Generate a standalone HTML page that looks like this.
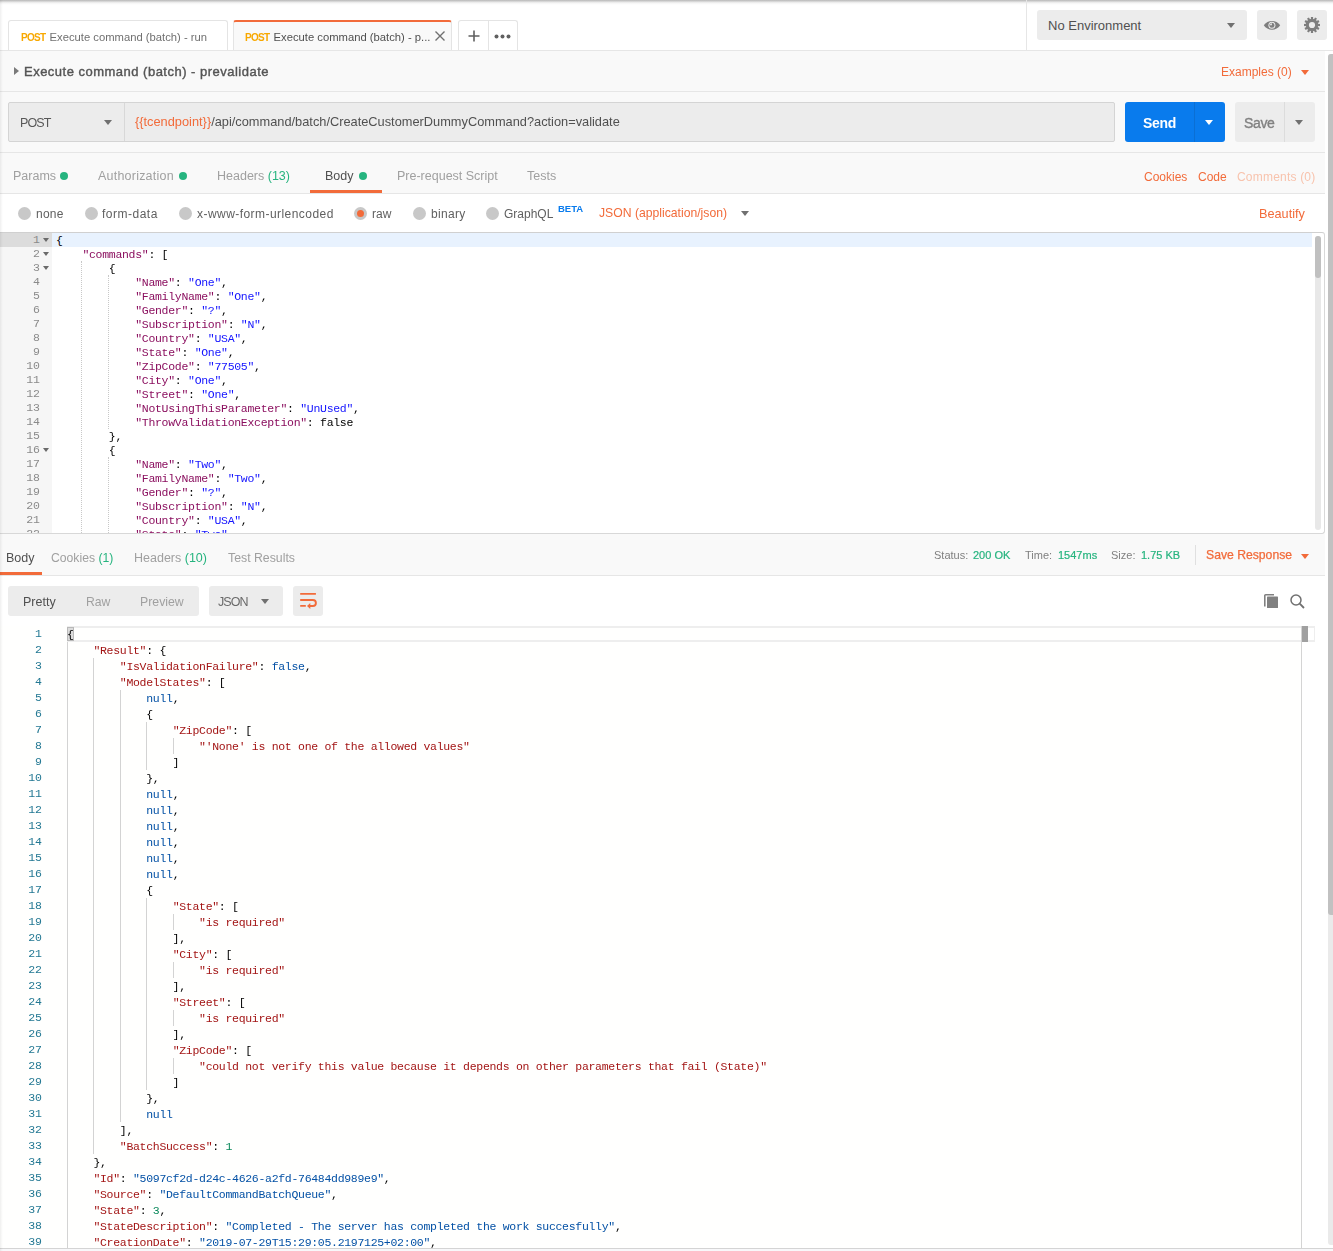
<!DOCTYPE html>
<html><head><meta charset="utf-8">
<style>
*{box-sizing:border-box}
html,body{margin:0;padding:0}
body{width:1333px;height:1251px;overflow:hidden;position:relative;background:#fff;font-family:"Liberation Sans",sans-serif;color:#505050}
.a{position:absolute;white-space:nowrap}
.ln{position:absolute;background:#e6e6e6}
.tri{position:absolute;width:0;height:0;border-left:4px solid transparent;border-right:4px solid transparent;border-top:5px solid #707070}
.dot{position:absolute;width:8px;height:8px;border-radius:50%;background:#26b47f}
.rad{position:absolute;width:13px;height:13px;border-radius:50%;background:#c8c8c8}
.grn{color:#26b47f}
.or{color:#f26b3a}
.mono{font-family:"Liberation Mono",monospace}
/* request editor */
#req{position:absolute;left:0;top:232px;width:1325px;border-top-right-radius:3px;border-bottom-right-radius:3px;height:302px;border-top:1px solid #d0d0d0;border-bottom:1px solid #d8d8d8;border-right:1px solid #d8d8d8;background:#fff;overflow:hidden}
#req .gut{position:absolute;left:0;top:0;width:52px;height:100%;background:#f6f6f6}
#req .l{position:absolute;left:0;margin-top:0.5px;height:14px;line-height:14px;font-size:11.5px;letter-spacing:-0.3px;font-family:"Liberation Mono",monospace;color:#000;white-space:pre}
#req .n{position:absolute;left:0;width:39.5px;text-align:right;height:14px;line-height:14px;font-size:11.5px;letter-spacing:-0.3px;font-family:"Liberation Mono",monospace;color:#8a8a8a}
#req .k{color:#8b0f5f}
#req .s,#req .a{color:#1414ff}
/* response editor */
#res .l{position:absolute;margin-top:0.5px;height:16px;line-height:16px;font-size:11.5px;letter-spacing:-0.3px;font-family:"Liberation Mono",monospace;color:#000;white-space:pre}
#res .n{position:absolute;left:0;width:41.5px;text-align:right;height:16px;line-height:16px;font-size:11.5px;letter-spacing:-0.3px;font-family:"Liberation Mono",monospace;color:#237893}
#res .k,#res .a{color:#a31515}
#res .s{color:#0451a5}
#res .c{color:#0451a5}
#res .g{color:#09885a}
</style></head><body>

<!-- top shadow -->
<div class="a" style="left:0;top:0;width:1333px;height:5px;background:linear-gradient(#b9b9b9,#cacaca 20%,#e5e5e5 40%,#f4f4f4 60%,#fbfbfb 80%,#fff);mix-blend-mode:multiply"></div>

<!-- tab bar -->
<div class="a" style="left:8px;top:20px;width:220px;height:31px;border:1px solid #e4e4e4;border-bottom:none;border-radius:3px 3px 0 0;background:#fff"></div>
<div class="a" style="left:21px;top:31.5px;font-size:10px;font-weight:bold;letter-spacing:-0.7px;color:#f8a800">POST</div>
<div class="a" style="left:49.5px;top:30.5px;font-size:11.25px;color:#707070">Execute command (batch) - run</div>

<div class="a" style="left:233px;top:20px;width:219px;height:31px;border:1px solid #e4e4e4;border-top:2px solid #f26b3a;border-bottom:none;border-radius:3px 3px 0 0;background:#f9f9f9"></div>
<div class="a" style="left:245px;top:31.5px;font-size:10px;font-weight:bold;letter-spacing:-0.7px;color:#f8a800">POST</div>
<div class="a" style="left:273.5px;top:30.5px;font-size:11.25px;color:#505050">Execute command (batch) - p...</div>
<svg class="a" style="left:434px;top:30px" width="12" height="12" viewBox="0 0 12 12"><path d="M1.5 1.5L10.5 10.5M10.5 1.5L1.5 10.5" stroke="#707070" stroke-width="1.4"/></svg>

<div class="a" style="left:458px;top:20px;width:60px;height:31px;border:1px solid #e4e4e4;border-bottom:none;border-radius:3px 3px 0 0;background:#fff"></div>
<div class="a" style="left:488px;top:20px;width:1px;height:30px;background:#e4e4e4"></div>
<svg class="a" style="left:468px;top:30px" width="12" height="12" viewBox="0 0 12 12"><path d="M6 0.5V11.5M0.5 6H11.5" stroke="#606060" stroke-width="1.6"/></svg>
<svg class="a" style="left:494px;top:33.5px" width="17" height="5" viewBox="0 0 17 5"><circle cx="2.5" cy="2.5" r="2" fill="#606060"/><circle cx="8.5" cy="2.5" r="2" fill="#606060"/><circle cx="14.5" cy="2.5" r="2" fill="#606060"/></svg>

<div class="a" style="left:1026px;top:0;width:1px;height:50px;background:#e6e6e6"></div>
<div class="a" style="left:1037px;top:10px;width:210px;height:30px;border-radius:3px;background:#ececec"></div>
<div class="a" style="left:1048px;top:18px;font-size:13px;color:#505050">No Environment</div>
<div class="tri" style="left:1227px;top:23px"></div>
<div class="a" style="left:1257px;top:10px;width:30px;height:30px;border-radius:3px;background:#ececec"></div>
<svg class="a" style="left:1263px;top:20px" width="18" height="11" viewBox="0 0 18 11"><path d="M0.8 5.3C4.5 -0.6 13.5 -0.6 17.2 5.3C13.5 11.2 4.5 11.2 0.8 5.3Z" fill="#7e7e7e"/><circle cx="8.9" cy="5.2" r="3.5" fill="#ececec"/><circle cx="8.9" cy="5.2" r="2.5" fill="#7e7e7e"/><path d="M8.9 5.2V3.2A2 2 0 0 0 6.9 5.2Z" fill="#ececec"/></svg>
<div class="a" style="left:1297px;top:10px;width:30px;height:30px;border-radius:3px;background:#ececec"></div>
<svg class="a" style="left:1302px;top:15px" width="20" height="20" viewBox="-10 -10 20 20"><g fill="#7e7e7e"><rect x="-1.1" y="-8" width="2.2" height="4" transform="rotate(0)"/><rect x="-1.1" y="-8" width="2.2" height="4" transform="rotate(30)"/><rect x="-1.1" y="-8" width="2.2" height="4" transform="rotate(60)"/><rect x="-1.1" y="-8" width="2.2" height="4" transform="rotate(90)"/><rect x="-1.1" y="-8" width="2.2" height="4" transform="rotate(120)"/><rect x="-1.1" y="-8" width="2.2" height="4" transform="rotate(150)"/><rect x="-1.1" y="-8" width="2.2" height="4" transform="rotate(180)"/><rect x="-1.1" y="-8" width="2.2" height="4" transform="rotate(210)"/><rect x="-1.1" y="-8" width="2.2" height="4" transform="rotate(240)"/><rect x="-1.1" y="-8" width="2.2" height="4" transform="rotate(270)"/><rect x="-1.1" y="-8" width="2.2" height="4" transform="rotate(300)"/><rect x="-1.1" y="-8" width="2.2" height="4" transform="rotate(330)"/><circle r="6.2"/></g><circle r="3.1" fill="#ececec"/></svg>

<!-- request panel bg -->
<div class="a" style="left:0;top:50px;width:1325px;height:144px;background:#f9f9f9"></div>
<div class="ln" style="left:0;top:50px;width:1333px;height:1px"></div>
<!-- title -->
<div class="tri" style="left:14px;top:67px;border-top:4px solid transparent;border-bottom:4px solid transparent;border-left:5px solid #7a7a7a;border-right:none"></div>
<div class="a" style="left:24px;top:63.5px;font-size:13px;letter-spacing:0.49px;-webkit-text-stroke:0.4px #555;color:#555">Execute command (batch) - prevalidate</div>
<div class="a or" style="left:1221px;top:64.5px;font-size:12px">Examples (0)</div>
<div class="tri" style="left:1301px;top:70px;border-top-color:#f26b3a"></div>
<div class="ln" style="left:0;top:91px;width:1325px;height:1px"></div>

<!-- url bar -->
<div class="a" style="left:8px;top:102px;width:1107px;height:40px;border:1px solid #d4d4d4;border-radius:2px;background:#ececec"></div>
<div class="a" style="left:124px;top:103px;width:1px;height:38px;background:#d8d8d8"></div>
<div class="a" style="left:20px;top:115.5px;font-size:12.5px;letter-spacing:-0.9px;color:#585858">POST</div>
<div class="tri" style="left:104px;top:120px"></div>
<div class="a" style="left:135px;top:114px;font-size:12.8px;color:#505050"><span class="or">{{tcendpoint}}</span>/api/command/batch/CreateCustomerDummyCommand?action=validate</div>

<div class="a" style="left:1125px;top:102px;width:100px;height:40px;border-radius:3px;background:#097bed"></div>
<div class="a" style="left:1194px;top:102px;width:1px;height:40px;background:#0a6fd4"></div>
<div class="a" style="left:1143px;top:114.5px;font-size:14px;font-weight:bold;letter-spacing:-0.3px;color:#fff">Send</div>
<div class="tri" style="left:1205px;top:120px;border-top-color:#fff"></div>
<div class="a" style="left:1235px;top:102px;width:80px;height:40px;border-radius:3px;background:#ececec"></div>
<div class="a" style="left:1284px;top:102px;width:1px;height:40px;background:#dcdcdc"></div>
<div class="a" style="left:1244px;top:114.5px;font-size:14px;letter-spacing:-0.35px;-webkit-text-stroke:0.35px #808080;color:#808080">Save</div>
<div class="tri" style="left:1295px;top:120px"></div>
<div class="ln" style="left:0;top:152px;width:1325px;height:1px"></div>

<!-- request tabs -->
<div class="a" style="left:13px;top:168.5px;font-size:12.5px;color:#a0a0a0">Params</div><div class="dot" style="left:60px;top:172px"></div>
<div class="a" style="left:98px;top:168.5px;font-size:12.5px;letter-spacing:0.22px;color:#a0a0a0">Authorization</div><div class="dot" style="left:179px;top:172px"></div>
<div class="a" style="left:217px;top:168.5px;font-size:12.5px;color:#a0a0a0">Headers <span class="grn">(13)</span></div>
<div class="a" style="left:325px;top:168.5px;font-size:12.5px;color:#505050">Body</div><div class="dot" style="left:359px;top:172px"></div>
<div class="a" style="left:310px;top:190px;width:72px;height:3px;background:#f26b3a"></div>
<div class="a" style="left:397px;top:168.5px;font-size:12.5px;color:#a0a0a0">Pre-request Script</div>
<div class="a" style="left:527px;top:168.5px;font-size:12.5px;color:#a0a0a0">Tests</div>
<div class="a or" style="left:1144px;top:170px;font-size:12px">Cookies</div>
<div class="a or" style="left:1198px;top:170px;font-size:12px">Code</div>
<div class="a" style="left:1237px;top:170px;font-size:12px;letter-spacing:0.2px;color:#f8c3ad">Comments (0)</div>
<div class="ln" style="left:0;top:193px;width:1325px;height:1px"></div>

<!-- body type row -->
<div class="rad" style="left:18px;top:207px"></div><div class="a" style="left:36px;top:206.5px;font-size:12px;letter-spacing:0.25px;color:#606060">none</div>
<div class="rad" style="left:85px;top:207px"></div><div class="a" style="left:102px;top:206.5px;font-size:12px;letter-spacing:0.5px;color:#606060">form-data</div>
<div class="rad" style="left:179px;top:207px"></div><div class="a" style="left:197px;top:206.5px;font-size:12px;letter-spacing:0.45px;color:#606060">x-www-form-urlencoded</div>
<div class="rad" style="left:354px;top:207px"><div style="position:absolute;left:3px;top:3px;width:7px;height:7px;border-radius:50%;background:#f26b3a"></div></div><div class="a" style="left:372px;top:206.5px;font-size:12px;color:#606060">raw</div>
<div class="rad" style="left:413px;top:207px"></div><div class="a" style="left:431px;top:206.5px;font-size:12px;letter-spacing:0.3px;color:#606060">binary</div>
<div class="rad" style="left:486px;top:207px"></div><div class="a" style="left:504px;top:206.5px;font-size:12px;color:#606060">GraphQL</div>
<div class="a" style="left:558px;top:203px;font-size:9.5px;font-weight:bold;color:#097bed">BETA</div>
<div class="a or" style="left:599px;top:206px;font-size:12.2px">JSON (application/json)</div>
<div class="tri" style="left:741px;top:211px"></div>
<div class="a or" style="left:1259px;top:206.5px;font-size:12.7px">Beautify</div>

<!-- REQ -->
<div id="req"><div class="gut"></div>
<div class="a" style="left:0;top:0;width:52px;height:14px;background:#dcdcdc"></div>
<div class="a" style="left:52px;top:0;width:1260px;height:14px;background:#e8f2fe"></div>
<div class="n" style="top:0px">1</div>
<div class="tri" style="left:43px;top:5px;border-left-width:3px;border-right-width:3px;border-top-width:4px;border-top-color:#6a6a6a"></div>
<div class="l" style="left:56.0px;top:0px">{</div>
<div class="n" style="top:14px">2</div>
<div class="tri" style="left:43px;top:19px;border-left-width:3px;border-right-width:3px;border-top-width:4px;border-top-color:#6a6a6a"></div>
<div class="l" style="left:56.0px;top:14px">    <span class="k">&quot;commands&quot;</span>: [</div>
<div class="n" style="top:28px">3</div>
<div class="tri" style="left:43px;top:33px;border-left-width:3px;border-right-width:3px;border-top-width:4px;border-top-color:#6a6a6a"></div>
<div class="l" style="left:56.0px;top:28px">        {</div>
<div class="n" style="top:42px">4</div>
<div class="l" style="left:56.0px;top:42px">            <span class="k">&quot;Name&quot;</span>: <span class="s">&quot;One&quot;</span>,</div>
<div class="n" style="top:56px">5</div>
<div class="l" style="left:56.0px;top:56px">            <span class="k">&quot;FamilyName&quot;</span>: <span class="s">&quot;One&quot;</span>,</div>
<div class="n" style="top:70px">6</div>
<div class="l" style="left:56.0px;top:70px">            <span class="k">&quot;Gender&quot;</span>: <span class="s">&quot;?&quot;</span>,</div>
<div class="n" style="top:84px">7</div>
<div class="l" style="left:56.0px;top:84px">            <span class="k">&quot;Subscription&quot;</span>: <span class="s">&quot;N&quot;</span>,</div>
<div class="n" style="top:98px">8</div>
<div class="l" style="left:56.0px;top:98px">            <span class="k">&quot;Country&quot;</span>: <span class="s">&quot;USA&quot;</span>,</div>
<div class="n" style="top:112px">9</div>
<div class="l" style="left:56.0px;top:112px">            <span class="k">&quot;State&quot;</span>: <span class="s">&quot;One&quot;</span>,</div>
<div class="n" style="top:126px">10</div>
<div class="l" style="left:56.0px;top:126px">            <span class="k">&quot;ZipCode&quot;</span>: <span class="s">&quot;77505&quot;</span>,</div>
<div class="n" style="top:140px">11</div>
<div class="l" style="left:56.0px;top:140px">            <span class="k">&quot;City&quot;</span>: <span class="s">&quot;One&quot;</span>,</div>
<div class="n" style="top:154px">12</div>
<div class="l" style="left:56.0px;top:154px">            <span class="k">&quot;Street&quot;</span>: <span class="s">&quot;One&quot;</span>,</div>
<div class="n" style="top:168px">13</div>
<div class="l" style="left:56.0px;top:168px">            <span class="k">&quot;NotUsingThisParameter&quot;</span>: <span class="s">&quot;UnUsed&quot;</span>,</div>
<div class="n" style="top:182px">14</div>
<div class="l" style="left:56.0px;top:182px">            <span class="k">&quot;ThrowValidationException&quot;</span>: false</div>
<div class="n" style="top:196px">15</div>
<div class="l" style="left:56.0px;top:196px">        },</div>
<div class="n" style="top:210px">16</div>
<div class="tri" style="left:43px;top:215px;border-left-width:3px;border-right-width:3px;border-top-width:4px;border-top-color:#6a6a6a"></div>
<div class="l" style="left:56.0px;top:210px">        {</div>
<div class="n" style="top:224px">17</div>
<div class="l" style="left:56.0px;top:224px">            <span class="k">&quot;Name&quot;</span>: <span class="s">&quot;Two&quot;</span>,</div>
<div class="n" style="top:238px">18</div>
<div class="l" style="left:56.0px;top:238px">            <span class="k">&quot;FamilyName&quot;</span>: <span class="s">&quot;Two&quot;</span>,</div>
<div class="n" style="top:252px">19</div>
<div class="l" style="left:56.0px;top:252px">            <span class="k">&quot;Gender&quot;</span>: <span class="s">&quot;?&quot;</span>,</div>
<div class="n" style="top:266px">20</div>
<div class="l" style="left:56.0px;top:266px">            <span class="k">&quot;Subscription&quot;</span>: <span class="s">&quot;N&quot;</span>,</div>
<div class="n" style="top:280px">21</div>
<div class="l" style="left:56.0px;top:280px">            <span class="k">&quot;Country&quot;</span>: <span class="s">&quot;USA&quot;</span>,</div>
<div class="n" style="top:294px">22</div>
<div class="l" style="left:56.0px;top:294px">            <span class="k">&quot;State&quot;</span>: <span class="s">&quot;Two&quot;</span>,</div>
<div class="n" style="top:308px">23</div>
<div class="l" style="left:56.0px;top:308px">            <span class="k">&quot;ZipCode&quot;</span>: <span class="s">&quot;77505&quot;</span>,</div>
<div class="a" style="left:81.0px;top:28px;width:1px;height:294px;border-left:1px dotted #c8c8c8"></div>
<div class="a" style="left:108.0px;top:42px;width:1px;height:154px;border-left:1px dotted #c8c8c8"></div>
<div class="a" style="left:108.0px;top:224px;width:1px;height:98px;border-left:1px dotted #c8c8c8"></div>
<div class="a" style="left:1315px;top:3px;width:6px;height:294px;border-radius:3px;background:#e8e8e8"></div>
<div class="a" style="left:1315px;top:3px;width:6px;height:42px;border-radius:3px;background:#c0c0c0"></div>
</div>

<!-- response tabs -->
<div class="a" style="left:0;top:534px;width:1325px;height:42px;background:#f9f9f9"></div>
<div class="a" style="left:6px;top:550.75px;font-size:12.5px;color:#505050">Body</div>
<div class="a" style="left:0;top:572px;width:42px;height:3px;background:#f26b3a"></div>
<div class="a" style="left:51px;top:550.75px;font-size:12.2px;color:#a0a0a0">Cookies <span class="grn">(1)</span></div>
<div class="a" style="left:134px;top:550.75px;font-size:12.5px;color:#a0a0a0">Headers <span class="grn">(10)</span></div>
<div class="a" style="left:228px;top:550.75px;font-size:12.3px;color:#a0a0a0">Test Results</div>
<div class="a" style="left:934px;top:549px;font-size:11px;color:#808080">Status:</div>
<div class="a grn" style="left:973px;top:549px;font-size:11px;-webkit-text-stroke:0.2px #26b47f">200 OK</div>
<div class="a" style="left:1025px;top:549px;font-size:11px;color:#808080">Time:</div>
<div class="a grn" style="left:1058px;top:549px;font-size:11px;-webkit-text-stroke:0.2px #26b47f">1547ms</div>
<div class="a" style="left:1111px;top:549px;font-size:11px;color:#808080">Size:</div>
<div class="a grn" style="left:1141px;top:549px;font-size:11px;-webkit-text-stroke:0.2px #26b47f">1.75 KB</div>
<div class="a" style="left:1195px;top:545px;width:1px;height:20px;background:#e0e0e0"></div>
<div class="a or" style="left:1206px;top:548px;font-size:12.2px;-webkit-text-stroke:0.25px #f26b3a">Save Response</div>
<div class="tri" style="left:1301px;top:553.5px;border-top-color:#f26b3a"></div>
<div class="ln" style="left:0;top:575px;width:1325px;height:1px"></div>

<!-- response toolbar -->
<div class="a" style="left:8px;top:586px;width:191px;height:30px;border-radius:3px;background:#ececec"></div>
<div class="a" style="left:23px;top:594.5px;font-size:12.5px;color:#505050">Pretty</div>
<div class="a" style="left:86px;top:594.5px;font-size:12.2px;color:#a0a0a0">Raw</div>
<div class="a" style="left:140px;top:594.5px;font-size:12.3px;color:#a0a0a0">Preview</div>
<div class="a" style="left:209px;top:586px;width:74px;height:30px;border-radius:3px;background:#ececec"></div>
<div class="a" style="left:218px;top:594.5px;font-size:12.5px;letter-spacing:-0.9px;color:#6a6a6a">JSON</div>
<div class="tri" style="left:261px;top:599px"></div>
<div class="a" style="left:293px;top:586px;width:30px;height:30px;border-radius:3px;background:#ececec"></div>
<svg class="a" style="left:296px;top:588px" width="24" height="24" viewBox="0 0 24 24"><g stroke="#f26b3a" stroke-width="1.9" fill="none"><path d="M4.2 5.9H19.9M4.2 12H16.9A3 3 0 0 1 16.9 18H13.5M4.2 17.9H9.8"/></g><path d="M11 17.9L14.3 14.9V20.9Z" fill="#f26b3a"/></svg>
<svg class="a" style="left:1264px;top:594px" width="14" height="14" viewBox="0 0 14 14"><path d="M0.8 12.5V1.6A0.8 0.8 0 0 1 1.6 0.8H10" stroke="#808080" stroke-width="1.6" fill="none"/><rect x="3" y="2.6" width="11" height="11.4" rx="0.6" fill="#808080"/></svg>
<svg class="a" style="left:1290px;top:594px" width="15" height="15" viewBox="0 0 15 15"><circle cx="6" cy="6" r="5" stroke="#707070" stroke-width="1.5" fill="none"/><path d="M9.7 9.7L14 14" stroke="#707070" stroke-width="1.8"/></svg>

<!-- RES -->
<div id="res">
<div class="a" style="left:0;top:626px;width:1301px;height:623px;background:#fffffe"></div>
<div class="a" style="left:67px;top:626px;width:1248px;height:16px;border:2px solid #eeeeee;border-right-width:1px"></div>
<div class="a" style="left:67px;top:627px;width:7px;height:14px;background:#dcdcdc;border:1px solid #b9b9b9"></div>
<div class="n" style="top:626px">1</div>
<div class="l" style="left:67.0px;top:626px">{</div>
<div class="n" style="top:642px">2</div>
<div class="l" style="left:67.0px;top:642px">    <span class="k">&quot;Result&quot;</span>: {</div>
<div class="n" style="top:658px">3</div>
<div class="l" style="left:67.0px;top:658px">        <span class="k">&quot;IsValidationFailure&quot;</span>: <span class="c">false</span>,</div>
<div class="n" style="top:674px">4</div>
<div class="l" style="left:67.0px;top:674px">        <span class="k">&quot;ModelStates&quot;</span>: [</div>
<div class="n" style="top:690px">5</div>
<div class="l" style="left:67.0px;top:690px">            <span class="c">null</span>,</div>
<div class="n" style="top:706px">6</div>
<div class="l" style="left:67.0px;top:706px">            {</div>
<div class="n" style="top:722px">7</div>
<div class="l" style="left:67.0px;top:722px">                <span class="k">&quot;ZipCode&quot;</span>: [</div>
<div class="n" style="top:738px">8</div>
<div class="l" style="left:67.0px;top:738px">                    <span class="a">&quot;&#x27;None&#x27; is not one of the allowed values&quot;</span></div>
<div class="n" style="top:754px">9</div>
<div class="l" style="left:67.0px;top:754px">                ]</div>
<div class="n" style="top:770px">10</div>
<div class="l" style="left:67.0px;top:770px">            },</div>
<div class="n" style="top:786px">11</div>
<div class="l" style="left:67.0px;top:786px">            <span class="c">null</span>,</div>
<div class="n" style="top:802px">12</div>
<div class="l" style="left:67.0px;top:802px">            <span class="c">null</span>,</div>
<div class="n" style="top:818px">13</div>
<div class="l" style="left:67.0px;top:818px">            <span class="c">null</span>,</div>
<div class="n" style="top:834px">14</div>
<div class="l" style="left:67.0px;top:834px">            <span class="c">null</span>,</div>
<div class="n" style="top:850px">15</div>
<div class="l" style="left:67.0px;top:850px">            <span class="c">null</span>,</div>
<div class="n" style="top:866px">16</div>
<div class="l" style="left:67.0px;top:866px">            <span class="c">null</span>,</div>
<div class="n" style="top:882px">17</div>
<div class="l" style="left:67.0px;top:882px">            {</div>
<div class="n" style="top:898px">18</div>
<div class="l" style="left:67.0px;top:898px">                <span class="k">&quot;State&quot;</span>: [</div>
<div class="n" style="top:914px">19</div>
<div class="l" style="left:67.0px;top:914px">                    <span class="a">&quot;is required&quot;</span></div>
<div class="n" style="top:930px">20</div>
<div class="l" style="left:67.0px;top:930px">                ],</div>
<div class="n" style="top:946px">21</div>
<div class="l" style="left:67.0px;top:946px">                <span class="k">&quot;City&quot;</span>: [</div>
<div class="n" style="top:962px">22</div>
<div class="l" style="left:67.0px;top:962px">                    <span class="a">&quot;is required&quot;</span></div>
<div class="n" style="top:978px">23</div>
<div class="l" style="left:67.0px;top:978px">                ],</div>
<div class="n" style="top:994px">24</div>
<div class="l" style="left:67.0px;top:994px">                <span class="k">&quot;Street&quot;</span>: [</div>
<div class="n" style="top:1010px">25</div>
<div class="l" style="left:67.0px;top:1010px">                    <span class="a">&quot;is required&quot;</span></div>
<div class="n" style="top:1026px">26</div>
<div class="l" style="left:67.0px;top:1026px">                ],</div>
<div class="n" style="top:1042px">27</div>
<div class="l" style="left:67.0px;top:1042px">                <span class="k">&quot;ZipCode&quot;</span>: [</div>
<div class="n" style="top:1058px">28</div>
<div class="l" style="left:67.0px;top:1058px">                    <span class="a">&quot;could not verify this value because it depends on other parameters that fail (State)&quot;</span></div>
<div class="n" style="top:1074px">29</div>
<div class="l" style="left:67.0px;top:1074px">                ]</div>
<div class="n" style="top:1090px">30</div>
<div class="l" style="left:67.0px;top:1090px">            },</div>
<div class="n" style="top:1106px">31</div>
<div class="l" style="left:67.0px;top:1106px">            <span class="c">null</span></div>
<div class="n" style="top:1122px">32</div>
<div class="l" style="left:67.0px;top:1122px">        ],</div>
<div class="n" style="top:1138px">33</div>
<div class="l" style="left:67.0px;top:1138px">        <span class="k">&quot;BatchSuccess&quot;</span>: <span class="g">1</span></div>
<div class="n" style="top:1154px">34</div>
<div class="l" style="left:67.0px;top:1154px">    },</div>
<div class="n" style="top:1170px">35</div>
<div class="l" style="left:67.0px;top:1170px">    <span class="k">&quot;Id&quot;</span>: <span class="s">&quot;5097cf2d-d24c-4626-a2fd-76484dd989e9&quot;</span>,</div>
<div class="n" style="top:1186px">36</div>
<div class="l" style="left:67.0px;top:1186px">    <span class="k">&quot;Source&quot;</span>: <span class="s">&quot;DefaultCommandBatchQueue&quot;</span>,</div>
<div class="n" style="top:1202px">37</div>
<div class="l" style="left:67.0px;top:1202px">    <span class="k">&quot;State&quot;</span>: <span class="g">3</span>,</div>
<div class="n" style="top:1218px">38</div>
<div class="l" style="left:67.0px;top:1218px">    <span class="k">&quot;StateDescription&quot;</span>: <span class="s">&quot;Completed - The server has completed the work succesfully&quot;</span>,</div>
<div class="n" style="top:1234px">39</div>
<div class="l" style="left:67.0px;top:1234px">    <span class="k">&quot;CreationDate&quot;</span>: <span class="s">&quot;2019-07-29T15:29:05.2197125+02:00&quot;</span>,</div>
<div class="a" style="left:67.0px;top:642px;width:1px;height:608px;background:#d3d3d3"></div>
<div class="a" style="left:93.4px;top:658px;width:1px;height:496px;background:#d3d3d3"></div>
<div class="a" style="left:119.8px;top:690px;width:1px;height:432px;background:#d3d3d3"></div>
<div class="a" style="left:146.2px;top:722px;width:1px;height:48px;background:#d3d3d3"></div>
<div class="a" style="left:172.6px;top:738px;width:1px;height:16px;background:#d3d3d3"></div>
<div class="a" style="left:146.2px;top:898px;width:1px;height:192px;background:#d3d3d3"></div>
<div class="a" style="left:172.6px;top:914px;width:1px;height:16px;background:#d3d3d3"></div>
<div class="a" style="left:172.6px;top:962px;width:1px;height:16px;background:#d3d3d3"></div>
<div class="a" style="left:172.6px;top:1010px;width:1px;height:16px;background:#d3d3d3"></div>
<div class="a" style="left:172.6px;top:1058px;width:1px;height:16px;background:#d3d3d3"></div>
<div class="a" style="left:1301px;top:626px;width:1px;height:622px;background:#d4d4d4"></div>
<div class="a" style="left:1302px;top:626px;width:6px;height:16px;background:#a0a0a0"></div>
</div>
<div class="a" style="left:0;top:1248px;width:1333px;height:1px;background:#d4d4d4"></div>
<div class="a" style="left:0;top:1249px;width:1333px;height:2px;background:#f8f8fa"></div>

<!-- window scrollbar -->
<div class="a" style="left:1328px;top:54px;width:5px;height:1191px;border-radius:3px 0 0 3px;background:#eaeaea"></div>
<div class="a" style="left:1328px;top:54px;width:5px;height:861px;border-radius:3px 0 0 3px;background:#c1c1c1"></div>

<div class="a" style="left:0;top:0;width:3px;height:1251px;background:linear-gradient(90deg,#efefef,#f5f5f5 33%,#fbfbfb 66%,#fff);mix-blend-mode:multiply"></div>
</body></html>
